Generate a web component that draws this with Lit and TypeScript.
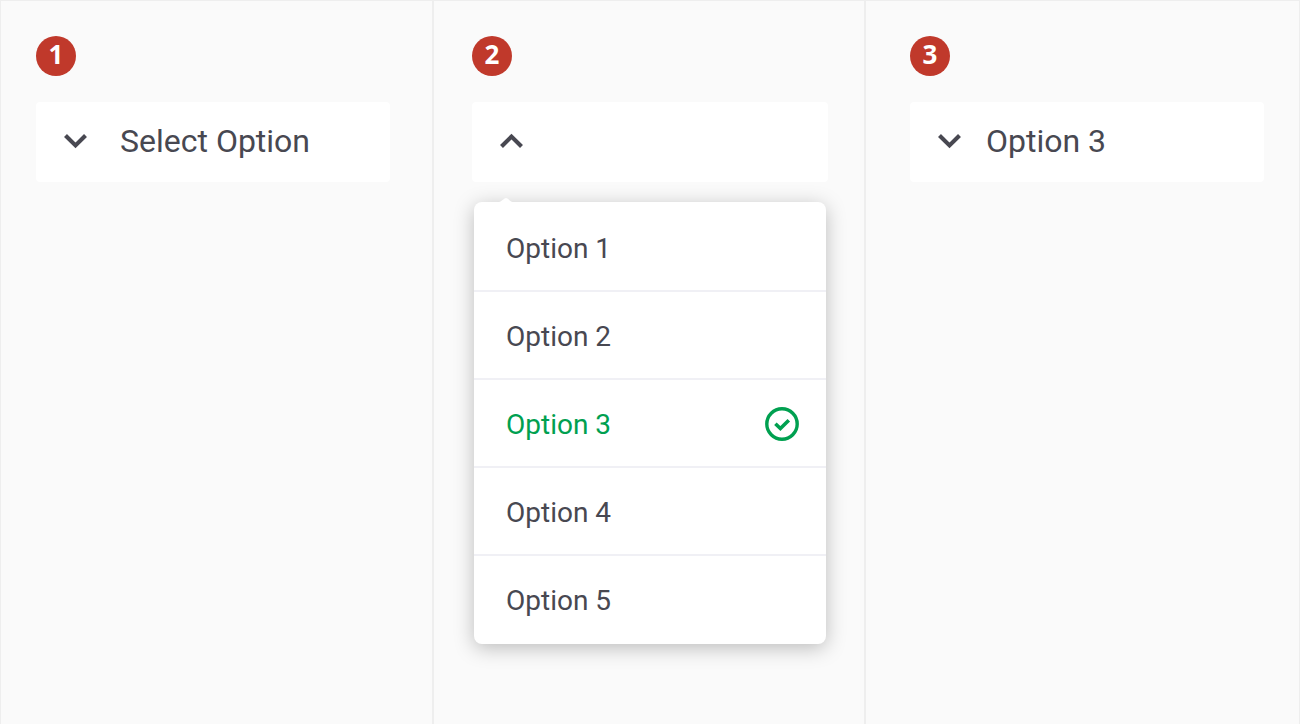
import { LitElement, html, css, nothing } from "lit";
import { customElement, property, state } from "lit/decorators.js";

const OPTIONS = ["Option 1", "Option 2", "Option 3", "Option 4", "Option 5"];

const chevron = (up = false) => html`
  <svg class="chevron" viewBox="0 0 24 16" aria-hidden="true">
    <path
      d=${up ? "M1.5 13.4 L11.5 3.6 L21.5 13.4" : "M1.5 2.6 L11.5 12.4 L21.5 2.6"}
      fill="none"
      stroke="currentColor"
      stroke-width="4.2"
      stroke-linejoin="miter"
    />
  </svg>
`;

@customElement("step-badge")
export class StepBadge extends LitElement {
  @property({ type: Number }) step = 1;

  static styles = css`
    :host {
      display: flex;
      align-items: center;
      justify-content: center;
      width: 40px;
      height: 40px;
      border-radius: 50%;
      background: #c0392b;
      color: #fff;
      font: 700 26px/36px "Noto Sans", "Open Sans", sans-serif;
      padding-bottom: 4px;
      box-sizing: border-box;
    }
  `;

  render() {
    return html`${this.step}`;
  }
}

@customElement("app-root")
export class AppRoot extends LitElement {
  @state() private selected = "Option 3";

  static styles = css`
    :host {
      display: block;
      color: #484851;
      font-family: Roboto, sans-serif;
    }
    .board {
      display: grid;
      grid-template-columns: 433fr 432fr 435fr;
      min-height: 100vh;
      background: #fafafa;
    }
    .step {
      display: flex;
      flex-direction: column;
      gap: 26px;
      min-width: 0;
      box-sizing: border-box;
      border: 1px solid #eee;
      border-bottom: 0;
      padding: 35px 42px 35px 35px;
    }
    .step.open {
      padding: 35px 36px 35px 38px;
    }
    .step.done {
      padding: 35px 35px 35px 44px;
    }
    .field {
      display: flex;
      align-items: center;
      gap: 32px;
      width: 100%;
      height: 80px;
      box-sizing: border-box;
      border: 0;
      border-radius: 4px;
      padding: 0 28px 2px;
      background: #fff;
      color: inherit;
    }
    .done .field {
      gap: 24px;
    }
    .chevron {
      flex: none;
      width: 24px;
      height: 16px;
    }
    .select {
      flex: 1;
      min-width: 0;
      appearance: none;
      border: 0;
      padding: 0;
      background: transparent;
      color: inherit;
      font: 400 32px/40px Roboto, sans-serif;
    }
    .dropdown {
      display: flex;
      flex-direction: column;
      gap: 20px;
    }
    .menu {
      position: relative;
      margin: 0 2px;
      padding-top: 2px;
      border-radius: 8px;
      background: #fff;
      box-shadow: 0 4px 20px rgba(0, 0, 0, 0.25);
    }
    .pointer {
      position: absolute;
      left: 25px;
      bottom: 100%;
      width: 14px;
      height: 4px;
      fill: #fff;
    }
    .option {
      display: flex;
      align-items: center;
      justify-content: space-between;
      height: 88px;
      box-sizing: border-box;
      border-bottom: 2px solid #f0f0f5;
      padding: 4px 26px 0 32px;
      font-size: 28px;
      line-height: 36px;
      cursor: pointer;
    }
    .option:last-child {
      border-bottom-color: transparent;
    }
    .option.chosen {
      color: #00a050;
    }
    .radio {
      position: absolute;
      opacity: 0;
      margin: 0;
    }
    .check {
      width: 36px;
      height: 36px;
      margin-bottom: 2px;
    }
  `;

  private choose(value: string) {
    this.selected = value;
  }

  render() {
    return html`
      <main class="board">
        <section class="step">
          <step-badge .step=${1}></step-badge>
          <div class="field">
            ${chevron()}
            <select class="select" aria-label="Select Option">
              <option>Select Option</option>
              ${OPTIONS.map((o) => html`<option>${o}</option>`)}
            </select>
          </div>
        </section>

        <section class="step open">
          <step-badge .step=${2}></step-badge>
          <div class="dropdown">
            <button class="field" type="button" aria-label="Close options" aria-expanded="true">
              ${chevron(true)}
            </button>
            <div class="menu" role="radiogroup" aria-label="Options">
              <svg class="pointer" viewBox="0 0 14 4" aria-hidden="true">
                <path d="M0 4 C2 4 4 1.5 5.5 0.6 Q7 -0.4 8.5 0.6 C10 1.5 12 4 14 4 Z" />
              </svg>
              ${OPTIONS.map(
                (o) => html`
                  <label class="option ${o === this.selected ? "chosen" : ""}">
                    <input
                      class="radio"
                      type="radio"
                      name="option"
                      .checked=${o === this.selected}
                      @change=${() => this.choose(o)}
                    />
                    <span>${o}</span>
                    ${o === this.selected
                      ? html`<svg class="check" viewBox="0 0 36 36" fill="none" stroke="currentColor" aria-hidden="true">
                          <circle cx="18" cy="18" r="15.2" stroke-width="3.4" />
                          <path d="M11.4 17.8 L16.4 22.6 L24.8 14.2" stroke-width="3.6" />
                        </svg>`
                      : nothing}
                  </label>
                `
              )}
            </div>
          </div>
        </section>

        <section class="step done">
          <step-badge .step=${3}></step-badge>
          <div class="field">
            ${chevron()}
            <select
              class="select"
              aria-label="Selected option"
              @change=${(e: Event) => this.choose((e.target as HTMLSelectElement).value)}
            >
              ${OPTIONS.map((o) => html`<option ?selected=${o === this.selected}>${o}</option>`)}
            </select>
          </div>
        </section>
      </main>
    `;
  }
}
